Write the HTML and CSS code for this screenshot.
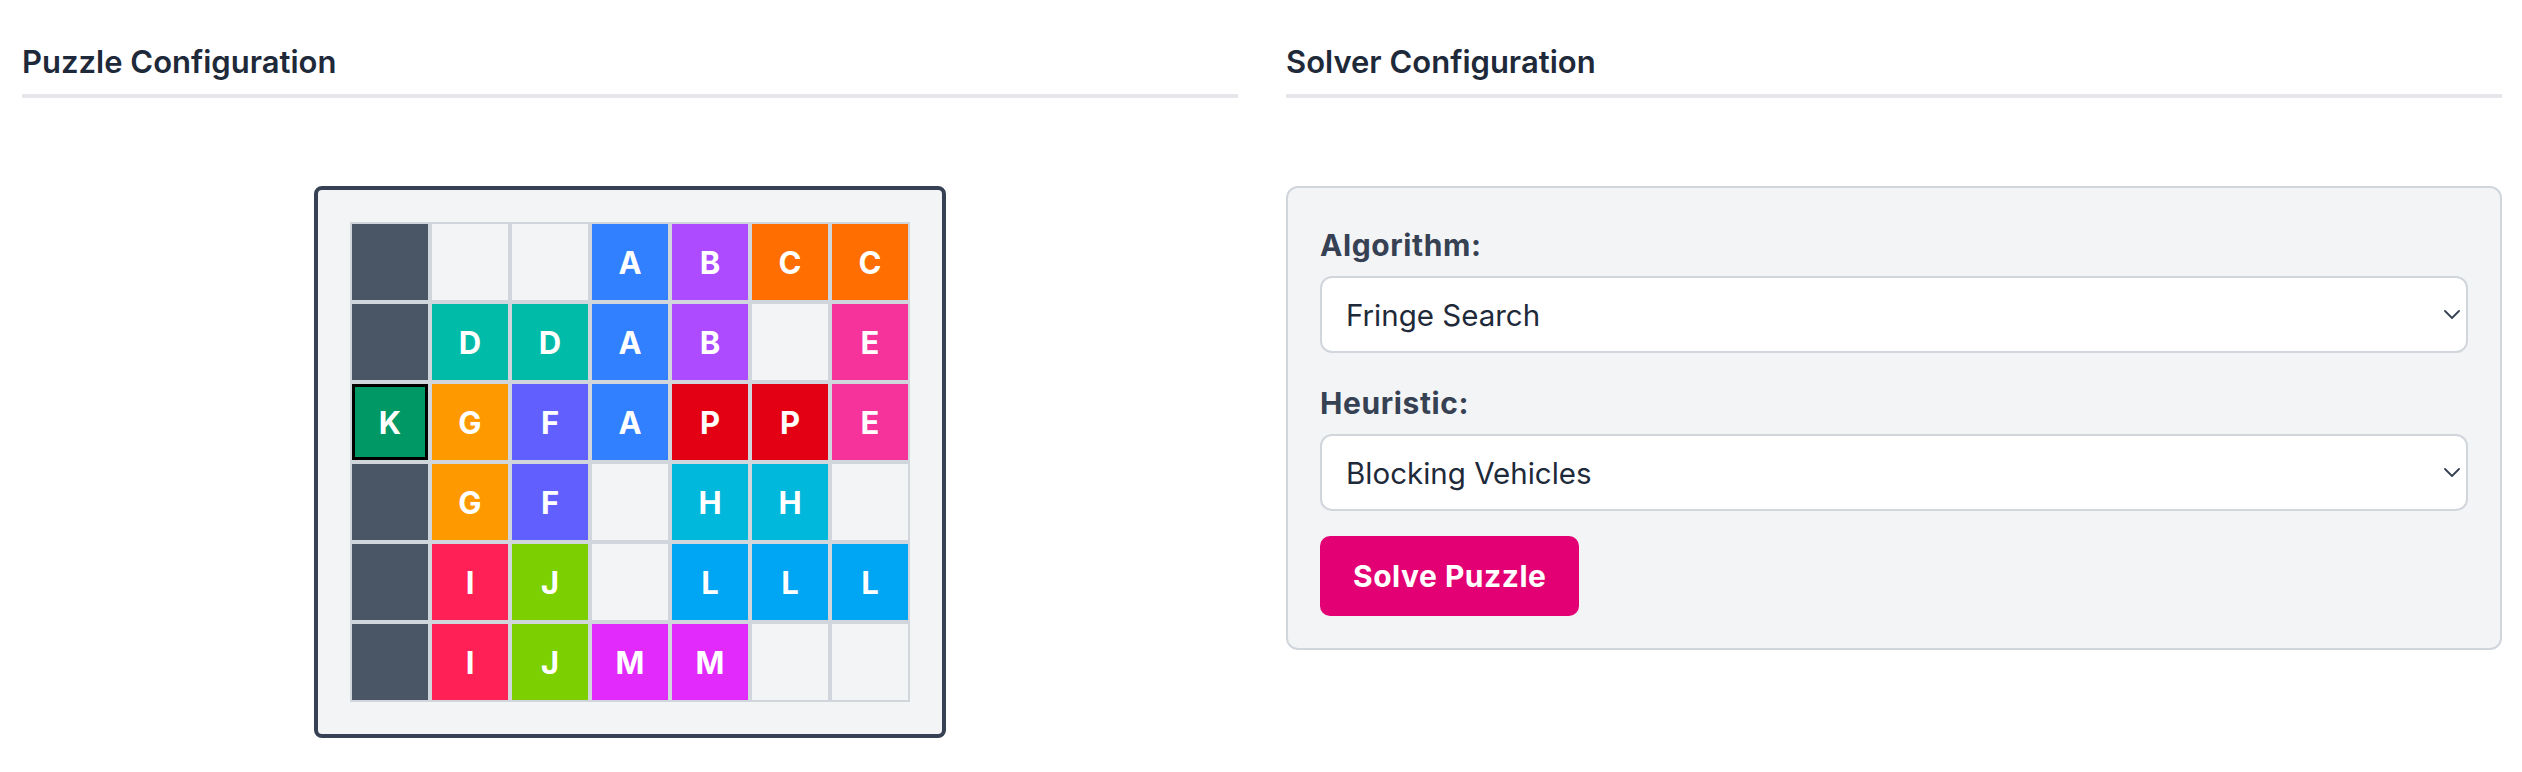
FILE: index.html
```html
<!DOCTYPE html>
<html lang="en">
<head>
<meta charset="utf-8">
<title>Rush Hour Solver</title>
<link rel="stylesheet" href="styles.css">
</head>
<body>
<main class="layout">
  <section class="column">
    <h2 class="section-title">Puzzle Configuration</h2>
    <div class="board-wrap">
      <div class="board">
        <div class="grid">
          <div class="cell wall"></div><div class="cell"></div><div class="cell"></div><div class="cell c-a">A</div><div class="cell c-b">B</div><div class="cell c-c">C</div><div class="cell c-c">C</div>
          <div class="cell wall"></div><div class="cell c-d">D</div><div class="cell c-d">D</div><div class="cell c-a">A</div><div class="cell c-b">B</div><div class="cell"></div><div class="cell c-e">E</div>
          <div class="cell c-k">K</div><div class="cell c-g">G</div><div class="cell c-f">F</div><div class="cell c-a">A</div><div class="cell c-p">P</div><div class="cell c-p">P</div><div class="cell c-e">E</div>
          <div class="cell wall"></div><div class="cell c-g">G</div><div class="cell c-f">F</div><div class="cell"></div><div class="cell c-h">H</div><div class="cell c-h">H</div><div class="cell"></div>
          <div class="cell wall"></div><div class="cell c-i">I</div><div class="cell c-j">J</div><div class="cell"></div><div class="cell c-l">L</div><div class="cell c-l">L</div><div class="cell c-l">L</div>
          <div class="cell wall"></div><div class="cell c-i">I</div><div class="cell c-j">J</div><div class="cell c-m">M</div><div class="cell c-m">M</div><div class="cell"></div><div class="cell"></div>
        </div>
      </div>
    </div>
  </section>
  <section class="column">
    <h2 class="section-title">Solver Configuration</h2>
    <div class="panel">
      <div class="field">
        <label class="field-label" for="algorithm">Algorithm:</label>
        <div class="select-wrap">
          <select id="algorithm" class="select">
            <option>Fringe Search</option>
          </select>
          <svg class="chevron" viewBox="0 0 16 9" width="16" height="9" aria-hidden="true"><path d="M1 1 L8 8 L15 1" fill="none" stroke="currentColor" stroke-width="1.8" stroke-linecap="round" stroke-linejoin="round"/></svg>
        </div>
      </div>
      <div class="field">
        <label class="field-label" for="heuristic">Heuristic:</label>
        <div class="select-wrap">
          <select id="heuristic" class="select">
            <option>Blocking Vehicles</option>
          </select>
          <svg class="chevron" viewBox="0 0 16 9" width="16" height="9" aria-hidden="true"><path d="M1 1 L8 8 L15 1" fill="none" stroke="currentColor" stroke-width="1.8" stroke-linecap="round" stroke-linejoin="round"/></svg>
        </div>
      </div>
      <button class="solve-btn" type="button">Solve Puzzle</button>
    </div>
  </section>
</main>
</body>
</html>
```

FILE: styles.css
```css
* { box-sizing: border-box; }

html, body {
  margin: 0;
  padding: 0;
  background: #ffffff;
  font-family: "Inter", "Noto Sans", "Liberation Sans", sans-serif;
  color: #1e2939;
}

.layout {
  display: grid;
  grid-template-columns: 1fr 1fr;
  column-gap: 48px;
  padding: 38px 20px 0 22px;
}

.column {
  display: flex;
  flex-direction: column;
  min-width: 0;
}

.section-title {
  margin: 0;
  font-size: 31px;
  line-height: 48px;
  font-weight: 600;
  color: #1e2939;
  padding-bottom: 8px;
  border-bottom: 4px solid #e5e7eb;
}

.board-wrap {
  margin-top: 88px;
  display: flex;
  justify-content: center;
}

.board {
  background: #f3f4f6;
  border: 4px solid #364153;
  border-radius: 8px;
  padding: 32px;
}

.grid {
  display: grid;
  grid-template-columns: repeat(7, 80px);
  grid-auto-rows: 80px;
}

.cell {
  border: 2px solid #d1d5dc;
  background: #f3f4f6;
  display: flex;
  align-items: center;
  justify-content: center;
  color: #ffffff;
  font-size: 31px;
  font-weight: 700;
  line-height: 1;
}

.wall { background: #4a5565; }
.c-a { background: #3080ff; }
.c-b { background: #ac4bff; }
.c-c { background: #fe6e00; }
.c-d { background: #00bba7; }
.c-e { background: #f6339a; }
.c-f { background: #625fff; }
.c-g { background: #fe9a00; }
.c-h { background: #00b8db; }
.c-i { background: #ff2056; }
.c-j { background: #7ccf00; }
.c-l { background: #00a6f4; }
.c-m { background: #e12afb; }
.c-p { background: #e40014; }
.c-k {
  background: #009966;
  box-shadow: inset 0 0 0 3px #000000;
}

.panel {
  margin-top: 88px;
  background: #f3f4f6;
  border: 2px solid #d1d5dc;
  border-radius: 12px;
  padding: 32px;
}

.field {
  display: flex;
  flex-direction: column;
  margin-bottom: 25px;
}

.field-label {
  font-size: 30px;
  line-height: 50px;
  font-weight: 700;
  letter-spacing: 0.6px;
  color: #364153;
  margin-bottom: 6px;
}

.select-wrap {
  position: relative;
}

.select {
  -webkit-appearance: none;
  appearance: none;
  width: 100%;
  height: 77px;
  margin: 0;
  background: #ffffff;
  border: 2px solid #d1d5dc;
  border-radius: 12px;
  padding: 0 40px 0 24px;
  font-family: inherit;
  font-size: 29.5px;
  font-weight: 400;
  color: #1e2939;
  outline: none;
}

.chevron {
  position: absolute;
  right: 8px;
  top: 34px;
  color: #364153;
  pointer-events: none;
}

.solve-btn {
  display: inline-block;
  align-self: flex-start;
  background: #e20074;
  color: #ffffff;
  border: none;
  border-radius: 10px;
  height: 80px;
  padding: 0 33px;
  font-family: inherit;
  font-size: 30px;
  font-weight: 700;
  letter-spacing: 0.5px;
  cursor: pointer;
}
```
